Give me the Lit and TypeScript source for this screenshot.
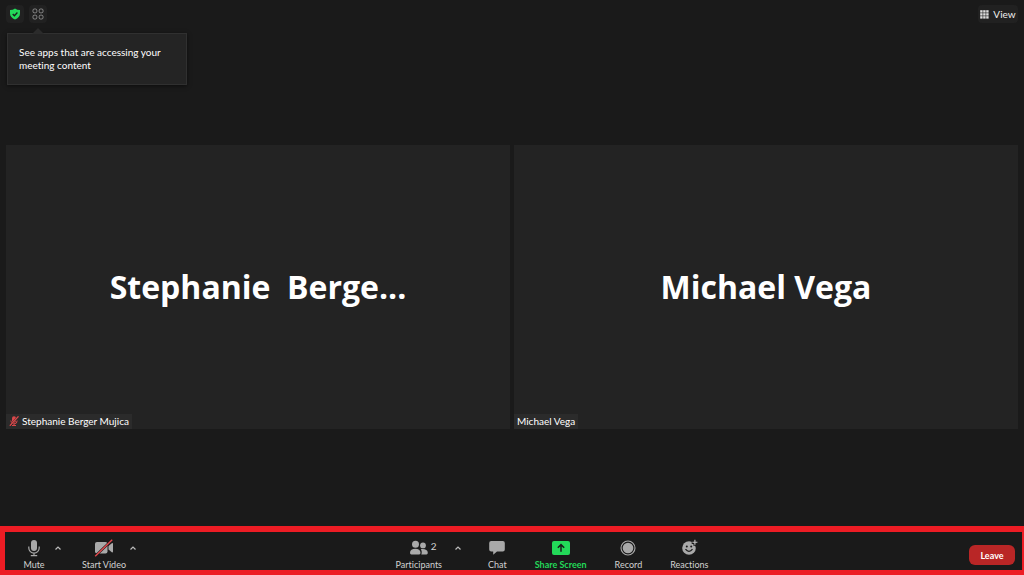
import { LitElement, html, css, svg, nothing } from "lit";
import { customElement, property } from "lit/decorators.js";

const icons: Record<string, unknown> = {
  mic: svg`<svg width="16" height="18" viewBox="0 0 16 18" fill="none" stroke="#a9a9a9">
    <rect x="5" y="1" width="6" height="11" rx="3" fill="#a9a9a9" stroke="none"/>
    <path d="M2.800 7.500v1.500a5.200 5.200 0 0 0 10.400 0V7.500M8 14.200v2.600M4.800 16.700h6.400" stroke-width="1.200"/></svg>`,
  video: svg`<svg width="20" height="18" viewBox="0 0 20 18">
    <rect x="1" y="3" width="12.500" height="11.500" rx="2" fill="#a9a9a9"/>
    <path d="M14.500 7l3.300-2.700q1.200-.6 1.200.6v7.700q0 1.200-1.200.6L14.500 10.500z" fill="#a9a9a9"/>
    <path d="M1.200 17.200L18.200.8" stroke="#1a1a1a" stroke-width="2.400"/>
    <path d="M1.200 17.200L18.200.8" stroke="#e5484d" stroke-width="1.400"/></svg>`,
  people: svg`<svg width="20" height="18" viewBox="0 0 20 18" fill="#a9a9a9">
    <circle cx="6.500" cy="5.300" r="3.500"/><circle cx="14" cy="6.400" r="2.900"/>
    <path d="M1 13.700C1 11 3.200 9.800 6.300 9.800s5.200 1.200 5.200 3.900q0 1.800-1.300 1.800H2.300Q1 15.500 1 13.700z"/>
    <path d="M11.800 10.300c3.400-.8 7 .5 7 3.400q0 1.800-1.300 1.800h-5.200c.7-1.700.6-3.700-.5-5.200z"/></svg>`,
  chat: svg`<svg width="18" height="18" viewBox="0 0 18 18">
    <path d="M3.200 2h11.600q2 0 2 2v6.500q0 2-2 2H9L5.200 15.800V12.500h-2q-2 0-2-2V4q0-2 2-2z" fill="#a9a9a9"/></svg>`,
  share: svg`<svg width="18" height="18" viewBox="0 0 18 18">
    <rect x="0" y="2" width="18" height="14" rx="2" fill="#23d959"/>
    <path d="M9 12.700V6M5.800 8.800L9 5.600l3.200 3.200" fill="none" stroke="#1a1a1a" stroke-width="1.500"/></svg>`,
  record: svg`<svg width="18" height="18" viewBox="0 0 18 18">
    <circle cx="9" cy="9" r="7" fill="none" stroke="#a9a9a9" stroke-width="1.100"/>
    <circle cx="9" cy="9" r="5.300" fill="#a9a9a9"/></svg>`,
  smile: svg`<svg width="18" height="18" viewBox="0 0 18 18">
    <circle cx="9" cy="9" r="6.800" fill="#a9a9a9"/>
    <circle cx="6.800" cy="7.500" r="1" fill="#1a1a1a"/><circle cx="11.200" cy="7.500" r="1" fill="#1a1a1a"/>
    <path d="M5.500 10.200q3.500 4.300 7 0" fill="none" stroke="#1a1a1a" stroke-width="1.300"/>
    <path d="M14.900.3v6.400M11.700 3.500h6.300" stroke="#1a1a1a" stroke-width="3"/>
    <path d="M14.900.7v5M12.400 3.200h5" stroke="#c4c4c4" stroke-width="1.100"/></svg>`,
  caret: svg`<svg width="8" height="6" viewBox="0 0 8 6"><path d="M1.500 4.500L4 2l2.500 2.500" fill="none" stroke="#bdbdbd" stroke-width="1.200"/></svg>`,
  shield: svg`<svg width="12" height="12" viewBox="0 0 12 12">
    <path d="M6 .5q2 1.500 5 1.500v3.500c0 2.800-2 4.800-5 6-3-1.200-5-3.200-5-6V2q3 0 5-1.500z" fill="#23d959"/>
    <path d="M3.700 6l1.700 1.700 3-3.200" fill="none" stroke="#1a1a1a" stroke-width="1.300"/></svg>`,
  apps: svg`<svg width="12" height="12" viewBox="0 0 12 12" fill="none" stroke="#8c8c8c" stroke-width="1">
    <rect x="1" y="1" width="3.800" height="3.800" rx="1.300"/><rect x="7.200" y="1" width="3.800" height="3.800" rx="1.300"/>
    <rect x="1" y="7.200" width="3.800" height="3.800" rx="1.300"/><rect x="7.200" y="7.200" width="3.800" height="3.800" rx="1.300"/></svg>`,
  grid: svg`<svg width="9" height="9" viewBox="0 0 9 9" fill="#dedede">
    ${[0, 3, 6].map((y) => [0, 3, 6].map((x) => svg`<rect x=${x + 0.2} y=${y + 0.2} width="2.400" height="2.400"/>`))}</svg>`,
  muted: svg`<svg width="10" height="10" viewBox="0 0 10 10" fill="none" stroke="#d9484b">
    <rect x="3" y="0.300" width="4" height="6.400" rx="2" fill="#d9484b" stroke="none"/>
    <path d="M1.800 4.500q0 3.400 3.200 3.400T8.200 4.500M5 7.800v1.700M3 9.500h4"/>
    <path d="M.8 9.800L9.500.3" stroke="#242424" stroke-width="1.800"/><path d="M.8 9.800L9.500.3" stroke-width="1.300"/></svg>`,
};

@customElement("tool-button")
export class ToolButton extends LitElement {
  @property() icon = "";
  @property() label = "";
  @property() count = "";
  @property() menu = "";
  @property({ type: Boolean }) accent = false;

  static styles = css`
    :host { display: flex; align-items: flex-start; }
    button { background: none; border: 0; padding: 0; color: #d2d2d2; font: inherit; cursor: pointer; }
    .main { display: flex; flex-direction: column; align-items: center; white-space: nowrap; }
    .split { min-width: 34px; }
    .face { display: flex; height: 18px; position: relative; }
    .label { line-height: 14px; margin-top: 1px; }
    .accent { color: #23d959; font-weight: 700; }
    .count { position: absolute; left: 100%; top: 0; margin-left: 2px; font-size: 10px; line-height: 14px; }
    .menu { display: flex; width: 20px; height: 18px; margin-left: -3px; align-items: center; justify-content: center; }
    .counted { margin-left: 6px; }
  `;

  render() {
    return html`<button class="main ${this.accent ? "accent" : ""} ${this.menu ? "split" : ""}">
        <span class="face">${icons[this.icon]}${this.count ? html`<span class="count">${this.count}</span>` : nothing}</span>
        <span class="label">${this.label}</span>
      </button>
      ${this.menu ? html`<button class="menu ${this.count ? "counted" : ""}" aria-label=${this.menu}>${icons.caret}</button>` : nothing}`;
  }
}

@customElement("video-tile")
export class VideoTile extends LitElement {
  @property() heading = "";
  @property() name = "";
  @property({ type: Boolean }) muted = false;

  static styles = css`
    :host { display: grid; grid-template-rows: 1fr; aspect-ratio: 16 / 9; background: #232323; min-width: 0; }
    .title, .tag { grid-area: 1 / 1; }
    .title { place-self: center; margin: 0; white-space: pre; font: 700 32px/46px "Open Sans", "Noto Sans", sans-serif; color: #fff; }
    .tag { place-self: end start; display: flex; align-items: center; gap: 3px; padding: 0 3px; background: #2b2b2b; color: #fff; line-height: 15px; }
  `;

  render() {
    return html`<h2 class="title">${this.heading}</h2>
      <span class="tag">${this.muted ? icons.muted : nothing}<span>${this.name}</span></span>`;
  }
}

@customElement("app-root")
export class AppRoot extends LitElement {
  static styles = css`
    :host {
      display: grid; grid-template-rows: 48px 1fr 49px; min-height: 100vh;
      background: #1a1a1a; color: #fff; font: 10px/13px Lato, "Open Sans", sans-serif;
      font-variant-ligatures: none;
    }
    button { border: 0; font: inherit; cursor: pointer; }
    .top { display: flex; align-items: flex-start; gap: 5px; padding: 5px 6px; }
    .chip { display: flex; align-items: center; justify-content: center; gap: 4px; width: 18px; height: 18px; padding: 0; border-radius: 4px; background: #212121; color: #f0f0f0; }
    .view { width: 40px; margin-left: auto; }
    .anchor { position: relative; }
    .tip {
      position: absolute; z-index: 1; top: 28px; left: -22px; width: 180px; box-sizing: border-box;
      padding: 12px 11px; border: 1px solid #303030; background: #242424; box-shadow: 0 1px 4px #0008;
    }
    .tip::before {
      content: ""; position: absolute; left: 24px; bottom: 100%;
      border: 6px solid transparent; border-top: 0; border-bottom-color: #2b2b2b;
    }
    .stage { display: grid; grid-template-columns: 1fr 1fr; gap: 4px; align-content: center; padding: 0 6px; }
    .bar {
      display: flex; justify-content: space-between; align-items: flex-start; overflow: hidden;
      border: solid #ed1c24; border-width: 6px 2px 5px 5px; padding: 7px 7px 0 12px; box-sizing: border-box;
      font-size: 9px;
    }
    .group { display: flex; }
    .left { gap: 14px; }
    .mid { gap: 20px; margin-right: 8px; }
    .tools { display: flex; gap: 28px; }
    .leave { height: 20px; width: 46px; margin-top: 6px; padding: 0; border-radius: 6px; background: #b92626; color: #fff; font-weight: 700; }
  `;

  render() {
    return html`
      <header class="top">
        <button class="chip" aria-label="Meeting security">${icons.shield}</button>
        <div class="anchor">
          <button class="chip" aria-label="Apps" aria-describedby="tip">${icons.apps}</button>
          <div class="tip" id="tip" role="tooltip">See apps that are accessing your meeting content</div>
        </div>
        <button class="chip view">${icons.grid}View</button>
      </header>
      <main class="stage">
        <video-tile heading="Stephanie  Berge..." name="Stephanie Berger Mujica" muted></video-tile>
        <video-tile heading="Michael Vega" name="Michael Vega"></video-tile>
      </main>
      <footer class="bar">
        <div class="group left">
          <tool-button icon="mic" label="Mute" menu="Audio options"></tool-button>
          <tool-button icon="video" label="Start Video" menu="Video options"></tool-button>
        </div>
        <div class="group mid">
          <tool-button icon="people" label="Participants" count="2" menu="Participant options"></tool-button>
          <div class="tools">
            <tool-button icon="chat" label="Chat"></tool-button>
            <tool-button icon="share" label="Share Screen" accent></tool-button>
            <tool-button icon="record" label="Record"></tool-button>
            <tool-button icon="smile" label="Reactions"></tool-button>
          </div>
        </div>
        <button class="leave">Leave</button>
      </footer>`;
  }
}
